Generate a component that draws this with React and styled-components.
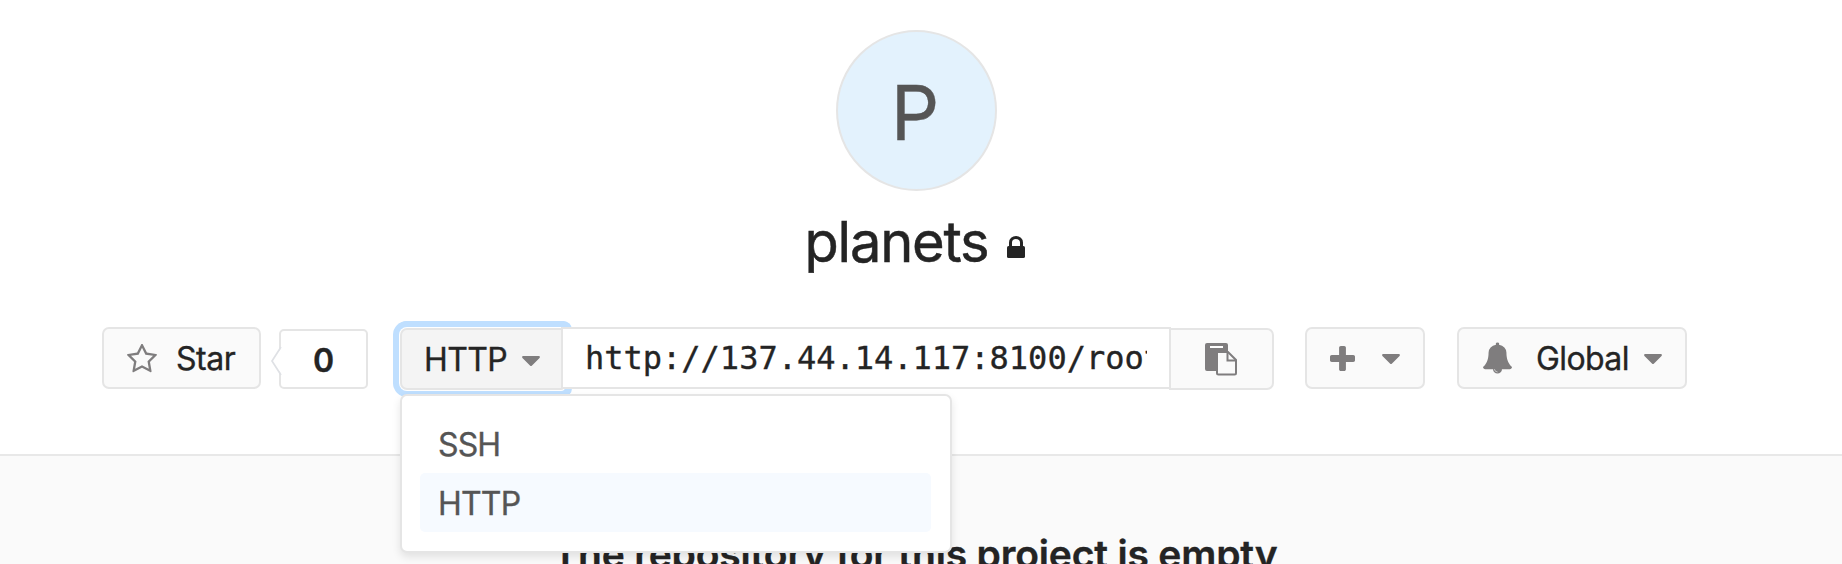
import React from "react";
import styled, { createGlobalStyle } from "styled-components";

const GlobalStyle = createGlobalStyle`
  * { box-sizing: border-box; }
  body { margin: 0; background: #fff; overflow: hidden; }
`;

const Page = styled.main`
  height: 564px;
  overflow: hidden;
  display: flex;
  flex-direction: column;
  color: #242424;
  font-family: Inter, "Liberation Sans", sans-serif;
  font-size: 32px;
  -webkit-text-stroke: 0.35px currentColor;
`;

const ProjectHeader = styled.header`
  height: 456px;
  flex: none;
  padding-top: 30px;
  display: flex;
  flex-direction: column;
  align-items: center;
  background: #fff;
  border-bottom: 2px solid #e8e8e8;
`;

const Avatar = styled.div`
  width: 161px;
  height: 161px;
  margin-right: 9px;
  padding-right: 3px;
  border: 2px solid #e5e5e5;
  border-radius: 50%;
  background: #e3f2fd;
  color: #555;
  font-size: 76px;
  line-height: 161px;
  text-align: center;
`;

const Title = styled.h1`
  display: flex;
  align-items: flex-end;
  gap: 19px;
  height: 64px;
  margin: 19px 12px 53px 0;
  font-size: 56px;
  font-weight: 400;
  line-height: 64px;
  letter-spacing: -1.2px;
  -webkit-text-stroke-width: 0.5px;
`;

const LockIcon = styled.svg`
  width: 18px;
  height: 22px;
  margin-bottom: 16px;
`;

const Toolbar = styled.div`
  display: flex;
  align-self: flex-start;
  height: 63px;
  padding-left: 102px;
`;

const Button = styled.button`
  display: flex;
  align-items: center;
  flex: none;
  width: ${(p) => p.$width}px;
  height: 62px;
  margin: 0 0 0 ${(p) => p.$gap || 0}px;
  padding: 0 0 0 ${(p) => p.$pad}px;
  border: 2px solid #e5e5e5;
  border-radius: 7px;
  background: #fafafa;
  color: #242424;
  font: inherit;
  line-height: 58px;
  letter-spacing: ${(p) => p.$tracking || 0}px;
`;

const Label = styled.span`
  padding-top: 2px;
`;

const Icon = styled.svg`
  flex: none;
  width: ${(p) => p.$w}px;
  height: ${(p) => p.$h}px;
  margin-right: ${(p) => p.$after || 0}px;
  fill: #7f7d7e;
`;

const Caret = styled(Icon)`
  margin-top: ${(p) => p.$drop || 2}px;
  margin-left: ${(p) => p.$before}px;
`;

const StarCount = styled.div`
  position: relative;
  width: 89px;
  height: 60px;
  margin: 2px 0 0 18px;
  border: 2px solid #e5e5e5;
  border-radius: 5px;
  font-weight: 600;
  line-height: 59px;
  text-align: center;
`;

const CountPointer = styled.svg`
  position: absolute;
  left: -11px;
  top: 15px;
  width: 12px;
  height: 30px;
`;

const CloneGroup = styled.div`
  position: relative;
  display: flex;
  width: 874px;
  margin-left: 32px;
`;

const ProtocolButton = styled(Button)`
  margin-top: 1px;
  border-radius: 7px 3px 3px 7px;
  background: #f4f4f4;
  box-shadow: 0 0 0 1px #fff, 0 0 0 7px #bfdfff, 1px 0 0 7px #bfdfff;
`;

const UrlField = styled.div`
  position: relative;
  width: 610px;
  height: 62px;
  margin-left: -3px;
  padding: 0 22px 0 22px;
  border: 2px solid #e5e5e5;
  background: #fff;
  font-family: "DejaVu Sans Mono", monospace;
  line-height: 58px;
`;

const UrlText = styled.span`
  display: block;
  overflow: hidden;
  white-space: nowrap;
`;

const CopyButton = styled(Button)`
  position: relative;
  margin: 1px 0 0 -2px;
  border-radius: 0 7px 7px 0;
`;

const Menu = styled.ul`
  position: absolute;
  z-index: 2;
  top: 67px;
  left: 0;
  width: 552px;
  height: 159px;
  margin: 0;
  padding: 18px 19px 18px 18px;
  list-style: none;
  border: 2px solid #e5e5e5;
  border-radius: 7px;
  background: #fff;
  box-shadow: 0 4px 8px rgba(0, 0, 0, 0.1);
`;

const MenuItem = styled.li`
  height: 59px;
  padding-left: 18px;
  border-radius: 5px;
  background: ${(p) => (p.$active ? "#f6faff" : "transparent")};
  color: #555;
  line-height: 61px;
  letter-spacing: ${(p) => p.$tracking}px;
`;

const EmptySection = styled.section`
  flex: 1;
  padding: 74px 12px 0 0;
  background: #fafafa;
  text-align: center;
`;

const EmptyHeading = styled.h2`
  margin: 0;
  font-size: 39px;
  font-weight: 600;
  line-height: 48px;
  letter-spacing: -0.18px;
  white-space: nowrap;
`;

const CaretDown = ({ before, drop }) => (
  <Caret $w={18} $h={10} $before={before} $drop={drop} viewBox="384 640 1024 576">
    <path d="M1408 704q0 26-19 45l-448 448q-19 19-45 19t-45-19l-448-448q-19-19-19-45t19-45 45-19h896q26 0 45 19t19 45z" />
  </Caret>
);

export default function App() {
  return (
    <Page>
      <GlobalStyle />
      <ProjectHeader>
        <Avatar>P</Avatar>
        <Title>
          <span>planets</span>
          <LockIcon viewBox="0 0 18 22">
            <rect y="10" width="18" height="12" rx="1.6" fill="#242424" />
            <path d="M3.5 11V6.5a5.5 5 0 0 1 11 0V11" fill="none" stroke="#242424" strokeWidth="3" />
          </LockIcon>
        </Title>
        <Toolbar>
          <Button $width={159} $pad={23} $tracking={-0.5}>
            <Icon $w={30} $h={29} $after={19} viewBox="64 62 1664 1587">
              <path d="M1137 1004l306-297-422-62-189-382-189 382-422 62 306 297-73 421 378-199 377 199zm527-357q0 22-26 48l-363 354 86 500q1 7 1 20 0 50-41 50-19 0-40-12l-449-236-449 236q-22 12-40 12-21 0-31.5-14.5t-10.5-35.5q0-6 2-20l86-500-364-354q-25-27-25-48 0-37 56-46l502-73 225-455q19-41 49-41t49 41l225 455 502 73q56 9 56 46z" transform="translate(64 0)" />
            </Icon>
            <Label>Star</Label>
          </Button>
          <StarCount>
            <CountPointer viewBox="0 0 12 30">
              <path d="M12 1 2 15l10 14z" fill="#fff" />
              <path d="M11 1 2 15l9 14" fill="none" stroke="#dfe1e5" strokeWidth="1.7" />
            </CountPointer>
            0
          </StarCount>
          <CloneGroup>
            <ProtocolButton $width={164} $pad={22} $tracking={-0.6}>
              <Label>HTTP</Label>
              <CaretDown before={15} drop={3} />
            </ProtocolButton>
            <UrlField>
              <UrlText>http://137.44.14.117:8100/root/planets.git</UrlText>
            </UrlField>
            <CopyButton $width={105} $pad={34}>
              <Icon $w={32} $h={33} viewBox="0 0 32 33">
                <path d="M2 0h19q2 0 2 2v7H11v19H2q-2 0-2-2V2q0-2 2-2z" />
                <path d="M5 3h13v2H5z" fill="#fff" />
                <path d="M13 9h10l8 8v13q0 1.500-1.500 1.500H13.500q-1.500 0-1.500-1.500V9z" fill="#fafafa" stroke="#7f7d7e" strokeWidth="2" />
                <path d="M22.500 9v8.500H31" fill="none" stroke="#7f7d7e" strokeWidth="2" />
              </Icon>
            </CopyButton>
            <Menu>
              <MenuItem $tracking={-0.9}>SSH</MenuItem>
              <MenuItem $active $tracking={-0.8}>HTTP</MenuItem>
            </Menu>
          </CloneGroup>
          <Button $width={120} $gap={31} $pad={23}>
            <Icon $w={25} $h={25} viewBox="192 128 1408 1408">
              <path d="M1600 736v192q0 40-28 68t-68 28h-416v416q0 40-28 68t-68 28h-192q-40 0-68-28t-28-68v-416h-416q-40 0-68-28t-28-68v-192q0-40 28-68t68-28h416v-416q0-40 28-68t68-28h192q40 0 68 28t28 68v416h416q40 0 68 28t28 68z" />
            </Icon>
            <CaretDown before={27} />
          </Button>
          <Button $width={230} $gap={32} $pad={24} $tracking={-0.6}>
            <Icon $w={29} $h={32} $after={24} viewBox="64 0 1664 1792">
              <path d="M912 1696q0-16-16-16-59 0-101.500-42.500t-42.500-101.500q0-16-16-16t-16 16q0 73 51.500 124.500t124.500 51.500q16 0 16-16zm816-288q0 52-38 90t-90 38h-448q0 106-75 181t-181 75-181-75-75-181h-448q-52 0-90-38t-38-90q50-42 91-88t85-119.500 74.500-158.500 50-206 19.500-260q0-152 117-282.500t307-158.500q-8-19-8-39 0-40 28-68t68-28 68 28 28 68q0 20-8 39 190 28 307 158.500t117 282.500q0 139 19.500 260t50 206 74.500 158.500 85 119.500 91 88z" />
            </Icon>
            <Label>Global</Label>
            <CaretDown before={15} />
          </Button>
        </Toolbar>
      </ProjectHeader>
      <EmptySection>
        <EmptyHeading>The repository for this project is empty</EmptyHeading>
      </EmptySection>
    </Page>
  );
}
